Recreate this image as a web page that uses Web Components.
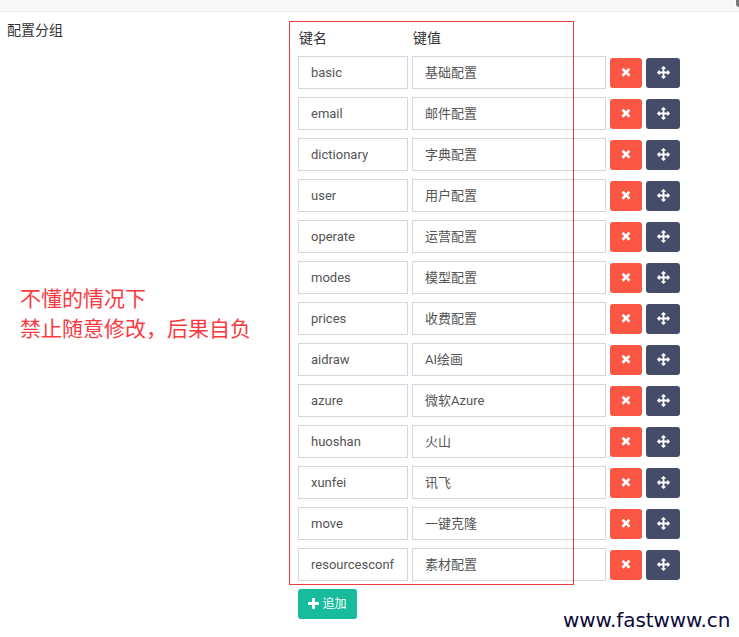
<!DOCTYPE html>
<html lang="zh">
<head>
<meta charset="utf-8">
<title>配置分组</title>
<style>
    html, body {
        margin: 0;
        background: #fff;
        overflow: hidden;
        font-family: Roboto, "Noto Sans CJK SC", sans-serif;
    }
</style>
</head>
<body>
<page-shell>
    <config-form label="配置分组">
        <kv-row name="basic" value="基础配置"></kv-row>
        <kv-row name="email" value="邮件配置"></kv-row>
        <kv-row name="dictionary" value="字典配置"></kv-row>
        <kv-row name="user" value="用户配置"></kv-row>
        <kv-row name="operate" value="运营配置"></kv-row>
        <kv-row name="modes" value="模型配置"></kv-row>
        <kv-row name="prices" value="收费配置"></kv-row>
        <kv-row name="aidraw" value="AI绘画"></kv-row>
        <kv-row name="azure" value="微软Azure"></kv-row>
        <kv-row name="huoshan" value="火山"></kv-row>
        <kv-row name="xunfei" value="讯飞"></kv-row>
        <kv-row name="move" value="一键克隆"></kv-row>
        <kv-row name="resourcesconf" value="素材配置"></kv-row>
    </config-form>
</page-shell>

<script>
const ICONS = {
    times: ['0 0 1408 1792', 'M1298 1214q0 40-28 68l-136 136q-28 28-68 28t-68-28l-294-294-294 294q-28 28-68 28t-68-28l-136-136q-28-28-28-68t28-68l294-294-294-294q-28-28-28-68t28-68l136-136q28-28 68-28t68 28l294 294 294-294q28-28 68-28t68 28l136 136q28 28 28 68t-28 68l-294 294 294 294q28 28 28 68z'],
    arrows: ['0 0 1792 1792', 'M1792 896q0 26-19 45l-256 256q-19 19-45 19t-45-19-19-45v-128h-384v384h128q26 0 45 19t19 45-19 45l-256 256q-19 19-45 19t-45-19l-256-256q-19-19-19-45t19-45 45-19h128v-384h-384v128q0 26-19 45t-45 19-45-19l-256-256q-19-19-19-45t19-45l256-256q19-19 45-19t45 19 19 45v128h384v-384h-128q-26 0-45-19t-19-45 19-45l256-256q19-19 45-19t45 19l256 256q19 19 19 45t-19 45-45 19h-128v384h384v-128q0-26 19-45t45-19 45 19l256 256q19 19 19 45z'],
    plus: ['0 0 1408 1792', 'M1408 736v192q0 40-28 68t-68 28h-416v416q0 40-28 68t-68 28h-192q-40 0-68-28t-28-68v-416h-416q-40 0-68-28t-28-68v-192q0-40 28-68t68-28h416v-416q0-40 28-68t68-28h192q40 0 68 28t28 68v416h416q40 0 68 28t28 68z']
};

const icon = (name, w, h) => {
    const [box, d] = ICONS[name];
    return `<svg width="${w}" height="${h}" viewBox="${box}" fill="currentColor"><path d="${d}"/></svg>`;
};

class PageShell extends HTMLElement {
    constructor() {
        super();
        this.shadow = this.attachShadow({ mode: 'open' });
    }

    connectedCallback() {
        this.shadow.innerHTML = /*html*/`
            <style>
                :host {
                    display: block;
                    position: relative;
                    height: 637px;
                }
                .topbar {
                    height: 11px;
                    background: #f8f8f8;
                    border-bottom: 1px solid #eeeeee;
                }
                .corner {
                    position: absolute;
                    right: 0;
                    top: 0;
                    width: 3px;
                    height: 7px;
                    background: #777;
                    border-left: 1px solid #fff;
                    border-bottom: 1px solid #fff;
                    border-bottom-left-radius: 4px;
                }
                .warning {
                    position: absolute;
                    left: 20px;
                    top: 282px;
                    font: 21px/30px "Noto Sans CJK SC", sans-serif;
                    color: #fb3a3f;
                }
                .site {
                    position: absolute;
                    left: 563px;
                    top: 607px;
                    font: 20px/26px "DejaVu Sans", sans-serif;
                    letter-spacing: -0.08px;
                    color: #0b0b3b;
                }
            </style>
            <div class="topbar"></div>
            <div class="corner"></div>
            <slot></slot>
            <div class="warning">不懂的情况下<br>禁止随意修改，后果自负</div>
            <div class="site">www.fastwww.cn</div>
        `;
    }
}

class ConfigForm extends HTMLElement {
    constructor() {
        super();
        this.shadow = this.attachShadow({ mode: 'open' });
    }

    connectedCallback() {
        this.shadow.innerHTML = /*html*/`
            <style>
                :host {
                    display: grid;
                    grid-template-columns: 298px auto;
                    padding-top: 10px;
                    font-size: 13px;
                    color: #333;
                }
                .label {
                    margin-top: -1px;
                    padding-left: 7px;
                    font: 14px/17px "Noto Sans CJK SC", sans-serif;
                }
                .head {
                    display: flex;
                    gap: 4px;
                    height: 34px;
                    padding-top: 5px;
                    box-sizing: border-box;
                    font: 14px/20px "Noto Sans CJK SC", sans-serif;
                }
                .head span {
                    padding-left: 1px;
                    box-sizing: border-box;
                }
                .head span:first-child {
                    width: 110px;
                }
                .rows {
                    display: flex;
                    flex-direction: column;
                    gap: 8px;
                }
                .add {
                    display: flex;
                    align-items: center;
                    justify-content: center;
                    gap: 3px;
                    width: 59px;
                    height: 30px;
                    margin-top: 8px;
                    border-radius: 3px;
                    background: #18bc9c;
                    color: #fff;
                    font: 12px "Noto Sans CJK SC", sans-serif;
                }
                .add span {
                    margin-top: -3px;
                }
                .frame {
                    position: absolute;
                    left: 289px;
                    top: 21px;
                    width: 283px;
                    height: 562px;
                    border: 1px solid #ee3b40;
                    pointer-events: none;
                }
            </style>
            <div class="label">${this.getAttribute('label')}</div>
            <div>
                <div class="head"><span>键名</span><span>键值</span></div>
                <div class="rows"><slot></slot></div>
                <div class="add">${icon('plus', 11, 14)}<span>追加</span></div>
            </div>
            <div class="frame"></div>
        `;
    }
}

class KvRow extends HTMLElement {
    constructor() {
        super();
        this.shadow = this.attachShadow({ mode: 'open' });
    }

    connectedCallback() {
        this.shadow.innerHTML = /*html*/`
            <style>
                :host {
                    display: flex;
                    align-items: center;
                    gap: 4px;
                    height: 33px;
                }
                .field {
                    height: 33px;
                    box-sizing: border-box;
                    padding: 0 12px;
                    border: 1px solid #d2d6de;
                    line-height: 31px;
                    font-size: 13px;
                    color: #555;
                    font-family: Roboto, "Noto Sans CJK SC", sans-serif;
                    white-space: nowrap;
                }
                .key {
                    width: 110px;
                }
                .val {
                    width: 194px;
                }
                .btn {
                    display: flex;
                    align-items: center;
                    justify-content: center;
                    height: 30px;
                    border-radius: 3px;
                    color: #fff;
                }
                .del {
                    width: 32px;
                    background: #fb5544;
                }
                .drag {
                    width: 34px;
                    background: #444c69;
                }
            </style>
            <div class="field key">${this.getAttribute('name')}</div>
            <div class="field val">${this.getAttribute('value')}</div>
            <div class="btn del">${icon('times', 10, 13)}</div>
            <div class="btn drag">${icon('arrows', 13, 13)}</div>
        `;
    }
}

customElements.define('page-shell', PageShell);
customElements.define('config-form', ConfigForm);
customElements.define('kv-row', KvRow);
</script>
</body>
</html>
